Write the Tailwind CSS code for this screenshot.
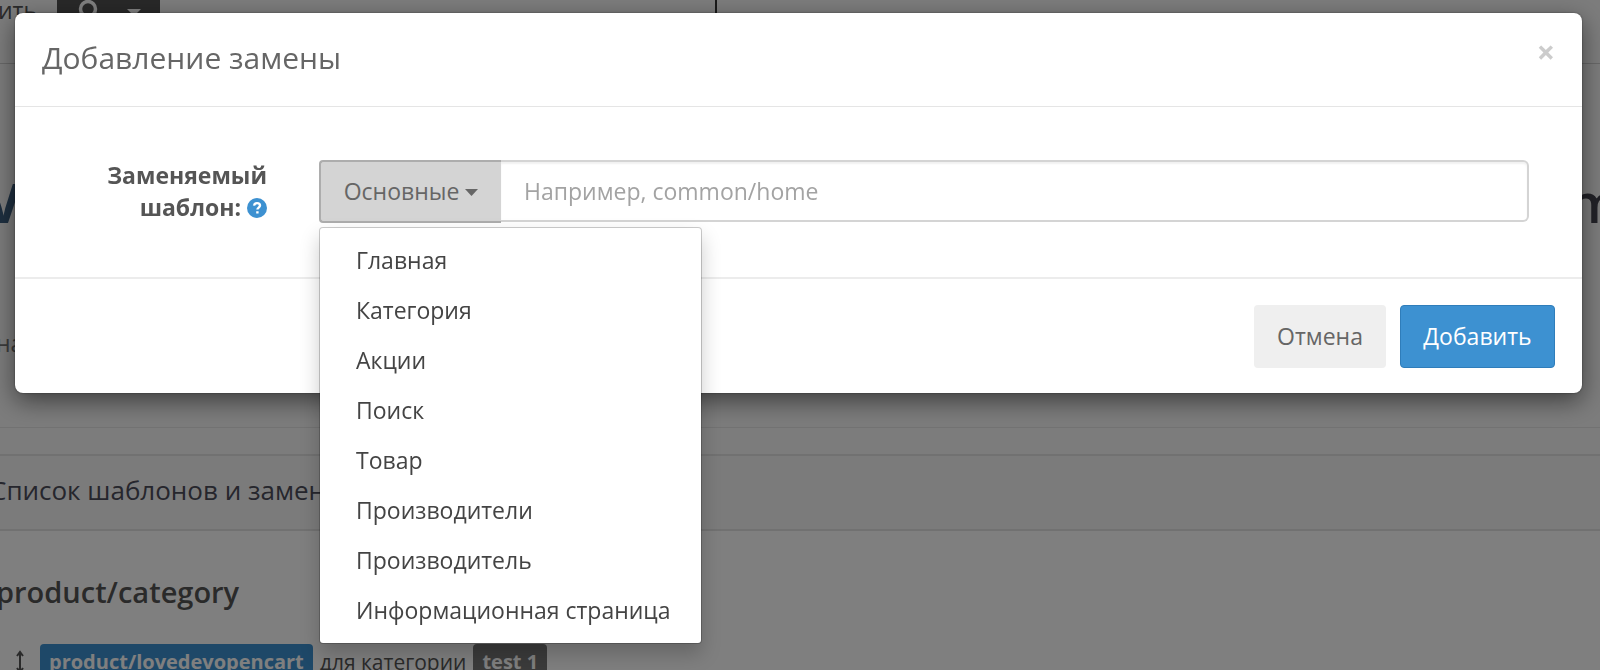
<!DOCTYPE html>
<html lang="ru">
<head>
  <meta charset="UTF-8" />
  <meta name="viewport" content="width=device-width, initial-scale=1.0"/>
  <title>Добавление замены</title>
  <script src="https://cdn.jsdelivr.net/npm/@tailwindcss/browser@4"></script>
</head>
<body class="h-screen overflow-hidden bg-white font-['Open_Sans',sans-serif] text-[23px] text-[#555]">

  <!-- Page behind the dialog -->
  <div class="h-screen overflow-hidden">
    <header class="flex h-16 border-b border-[#d0d0d0] bg-[#f9f9f9]">
      <div class="flex w-[717px] items-start border-r-2 border-[#333]">
        <span class="-mt-1 -ml-0.5 w-[59px] leading-7">ить</span>
        <button type="button" class="flex h-8 w-[103px] items-start gap-7 bg-[#515151] pl-[21px] text-white" aria-label="Поиск">
          <svg class="h-6 w-5" viewBox="0 0 20 24" fill="none" stroke="currentColor" stroke-width="3.500"><circle cx="10" cy="9" r="7.500"/></svg>
          <svg class="mt-2 h-2 w-4" viewBox="0 0 16 8" fill="currentColor"><path d="M1 1h14L8 8z"/></svg>
        </button>
      </div>
    </header>

    <section class="h-[364px] border-b border-[#e4e4e4] bg-[#f9f9f9] pt-[98px]">
      <div class="-mr-5 -ml-3.5 flex justify-between text-[54px] leading-[80px] font-bold">
        <span class="text-[#3d5f80]">V</span>
        <span class="font-semibold text-[#44444f]">m</span>
      </div>
      <p class="mt-[85px] -ml-1 leading-8 text-[#777]">на</p>
    </section>

    <section class="bg-[#f9f9f9] pt-[26px]">
      <div class="border-y-2 border-[#e2e2e2] bg-[#f6f6f6] pt-[14px] pb-[19px]">
        <h3 class="-ml-2.5 text-[26px] leading-10 text-[#4c4d5a]">Список шаблонов и замен</h3>
      </div>
      <div class="bg-white pt-[41px]">
        <h4 class="-ml-1 text-[29px] leading-10 font-semibold text-[#555]">product/category</h4>
        <div class="mt-8 flex items-center gap-[7px] pl-4 text-[20px] leading-9">
          <svg class="mr-[9px] h-6 w-2 text-[#555]" viewBox="0 0 8 24" fill="none" stroke="currentColor" stroke-width="2"><path d="M4 3v18M1 6l3-4 3 4M1 18l3 4 3-4"/></svg>
          <span class="rounded bg-[#3d91d1] px-[9px] font-bold text-white">product/lovedevopencart</span>
          <span class="text-[21px]">для категории</span>
          <span class="rounded bg-[#777] px-[9px] font-bold text-white">test 1</span>
        </div>
      </div>
    </section>
  </div>

  <div class="fixed inset-0 bg-black/50"></div>

  <!-- Dialog -->
  <div role="dialog" aria-labelledby="dialogTitle" class="fixed inset-x-[15px] top-[13px] mr-[3px] rounded-lg bg-white shadow-[0_8px_24px_rgba(0,0,0,0.5),0_0_2px_rgba(0,0,0,0.5)]">
    <div class="flex items-start justify-between border-b border-[#e5e5e5] px-[27px] pt-[25px] pb-[28px]">
      <h2 id="dialogTitle" class="text-[30px] leading-10 text-[#666]">Добавление замены</h2>
      <button type="button" class="text-[32px] leading-7 font-bold text-[#ccc]" aria-label="Закрыть">×</button>
    </div>

    <form id="replaceForm" class="flex items-start px-[53px] pt-[53px] pb-[54px]">
      <label for="template" class="-mt-px w-[199px] shrink-0 text-right leading-8 font-bold">
        Заменяемый<br>шаблон:
        <svg class="mb-1 inline h-5 w-5" viewBox="0 0 20 20" fill="none"><circle cx="10" cy="10" r="10" fill="#3d91d1"/><path d="M7 7.6c.3-1.7 1.5-2.5 3-2.5 1.700 0 3 .9 3 2.500 0 2-2.600 2-2.600 4M10.400 13.200v2.300" stroke="#fff" stroke-width="2.400"/></svg>
      </label>
      <div class="relative ml-[52px] flex min-w-0 flex-1">
        <button type="button" class="flex h-[63px] w-[182px] shrink-0 items-center justify-center gap-1.5 rounded-l border-2 border-r-0 border-[#adadad] bg-[#d4d4d4] text-[#666]" aria-expanded="true">
          Основные
          <svg class="h-2 w-[13px]" viewBox="0 0 13 8" fill="currentColor"><path d="M0 1h13L6.500 8z"/></svg>
        </button>
        <input type="text" id="template" placeholder="Например, common/home" class="h-[62px] min-w-0 flex-1 rounded-r-md border-2 border-l-0 border-[#d4d4d4] px-[23px] shadow-[inset_0_2px_2px_rgba(0,0,0,0.06)] outline-none placeholder:text-[#a3a3a3]" />

        <ul class="absolute top-[67px] left-0 w-[383px] rounded border border-black/20 bg-white bg-clip-padding pt-[7px] pb-2 whitespace-nowrap text-[#444] shadow-[0_10px_20px_rgba(0,0,0,0.2)]">
          <li><a href="#" class="block px-9 py-2 leading-[34px]">Главная</a></li>
          <li><a href="#" class="block px-9 py-2 leading-[34px]">Категория</a></li>
          <li><a href="#" class="block px-9 py-2 leading-[34px]">Акции</a></li>
          <li><a href="#" class="block px-9 py-2 leading-[34px]">Поиск</a></li>
          <li><a href="#" class="block px-9 py-2 leading-[34px]">Товар</a></li>
          <li><a href="#" class="block px-9 py-2 leading-[34px]">Производители</a></li>
          <li><a href="#" class="block px-9 py-2 leading-[34px]">Производитель</a></li>
          <li><a href="#" class="block px-9 py-2 leading-[34px]">Информационная страница</a></li>
        </ul>
      </div>
    </form>

    <div class="flex justify-end gap-[14px] border-t-2 border-[#ececec] px-[27px] pt-[26px] pb-[25px]">
      <button type="button" class="h-[63px] w-[132px] rounded bg-[#efefef] text-[#666]">Отмена</button>
      <button type="submit" form="replaceForm" class="h-[63px] w-[155px] rounded border border-[#2f7dba] bg-[#3d91d1] text-white">Добавить</button>
    </div>
  </div>

</body>
</html>
